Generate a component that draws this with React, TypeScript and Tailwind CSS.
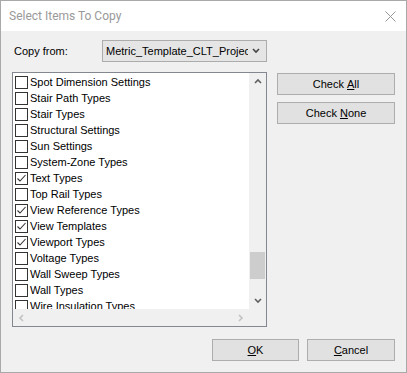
import React from "react";

interface CopyItem {
  label: string;
  checked: boolean;
}

const items: CopyItem[] = [
  { label: "Spot Dimension Settings", checked: false },
  { label: "Stair Path Types", checked: false },
  { label: "Stair Types", checked: false },
  { label: "Structural Settings", checked: false },
  { label: "Sun Settings", checked: false },
  { label: "System-Zone Types", checked: false },
  { label: "Text Types", checked: true },
  { label: "Top Rail Types", checked: false },
  { label: "View Reference Types", checked: true },
  { label: "View Templates", checked: true },
  { label: "Viewport Types", checked: true },
  { label: "Voltage Types", checked: false },
  { label: "Wall Sweep Types", checked: false },
  { label: "Wall Types", checked: false },
  { label: "Wire Insulation Types", checked: false },
];

// dialog body uses a MS Sans Serif lookalike, title bar uses a Segoe-ish face
const font = "font-['Microsoft_Sans_Serif','Liberation_Sans',Arial,sans-serif]";
const titleFont = "font-['Segoe_UI',Roboto,'Liberation_Sans',sans-serif]";

function CheckBox({ checked }: { checked: boolean }) {
  return (
    <span className="flex h-[13px] w-[13px] shrink-0 items-center justify-center border border-[#333333] bg-white">
      {checked && (
        <svg width="11" height="11" viewBox="0 0 11 11" fill="none">
          <path d="M1.5 5.5 L4 8 L9.5 2" stroke="#333333" strokeWidth="1.1" />
        </svg>
      )}
    </span>
  );
}

function Chevron({ dir, color }: { dir: "up" | "down" | "left" | "right"; color: string }) {
  const d = {
    up: "M1 5 L4 2 L7 5",
    down: "M1 2 L4 5 L7 2",
    left: "M5 1 L2 4 L5 7",
    right: "M2 1 L5 4 L2 7",
  }[dir];
  return (
    <svg width="8" height="8" viewBox="0 0 8 8" fill="none">
      <path d={d} stroke={color} strokeWidth="1.6" />
    </svg>
  );
}

function DlgButton({ children, w }: { children: React.ReactNode; w: string }) {
  return (
    <button
      className={`flex h-[22px] ${w} items-center justify-center border border-[#adadad] bg-[#e1e1e1] text-[11px] text-black`}
    >
      {children}
    </button>
  );
}

export default function App() {
  return (
    <div className={`flex h-[373px] w-[407px] flex-col border border-[#a9a9a9] bg-[#f0f0f0] ${font}`}>
      {/* title bar */}
      <div className="flex h-[30px] shrink-0 items-center justify-between bg-white pl-[8px] pr-[10px]">
        <span className={`text-[12px] text-[#999999] ${titleFont}`}>Select Items To Copy</span>
        <svg width="11" height="11" viewBox="0 0 11 11" fill="none">
          <path d="M0.5 0.5 L10.5 10.5 M10.5 0.5 L0.5 10.5" stroke="#999999" strokeWidth="1" />
        </svg>
      </div>

      <div className="flex flex-1 flex-col pl-[11px] pr-[11px]">
        {/* copy from */}
        <div className="mt-[9px] flex h-[22px] items-center">
          <span className="w-[90px] pl-[2px] text-[11px] text-black">Copy from:</span>
          <div className="flex h-[22px] w-[165px] items-center justify-between border border-[#acacac] bg-[#e5e5e5] pl-[3px] pr-[6px]">
            <span className="w-[142px] overflow-hidden whitespace-nowrap text-[11px] text-black">
              Metric_Template_CLT_Project
            </span>
            <Chevron dir="down" color="#444444" />
          </div>
        </div>

        {/* list + side buttons */}
        <div className="mt-[10px] flex">
          <div className="flex h-[255px] w-[255px] flex-col border border-[#828790] bg-white">
            <div className="flex h-[236px]">
              <div className="flex w-[236px] flex-col overflow-hidden pl-[2px] pt-[1px]">
                {items.map((it) => (
                  <div key={it.label} className="flex h-[16px] shrink-0 items-center gap-[2px]">
                    <CheckBox checked={it.checked} />
                    <span className="whitespace-nowrap text-[11px] leading-[16px] text-black">{it.label}</span>
                  </div>
                ))}
              </div>
              {/* vertical scrollbar */}
              <div className="flex w-[17px] flex-col bg-[#f0f0f0]">
                <div className="flex h-[17px] items-center justify-center">
                  <Chevron dir="up" color="#606060" />
                </div>
                <div className="h-[162px]" />
                <div className="mx-[1px] h-[27px] bg-[#cdcdcd]" />
                <div className="flex-1" />
                <div className="flex h-[17px] items-center justify-center">
                  <Chevron dir="down" color="#606060" />
                </div>
              </div>
            </div>
            {/* horizontal scrollbar */}
            <div className="flex h-[17px] bg-[#f0f0f0]">
              <div className="flex w-[236px] items-center justify-between">
                <div className="flex w-[17px] items-center justify-center">
                  <Chevron dir="left" color="#c2c2c2" />
                </div>
                <div className="flex w-[17px] items-center justify-center">
                  <Chevron dir="right" color="#c2c2c2" />
                </div>
              </div>
            </div>
          </div>

          <div className="ml-[10px] mt-[1px] flex flex-col gap-[7px]">
            <DlgButton w="w-[118px]">
              Check&nbsp;<span className="underline">A</span>ll
            </DlgButton>
            <DlgButton w="w-[118px]">
              Check&nbsp;<span className="underline">N</span>one
            </DlgButton>
          </div>
        </div>

        {/* bottom buttons */}
        <div className="mt-[12px] flex justify-end gap-[8px]">
          <DlgButton w="w-[87px]">
            <span className="underline">O</span>K
          </DlgButton>
          <DlgButton w="w-[88px]">
            <span className="underline">C</span>ancel
          </DlgButton>
        </div>
      </div>
    </div>
  );
}
